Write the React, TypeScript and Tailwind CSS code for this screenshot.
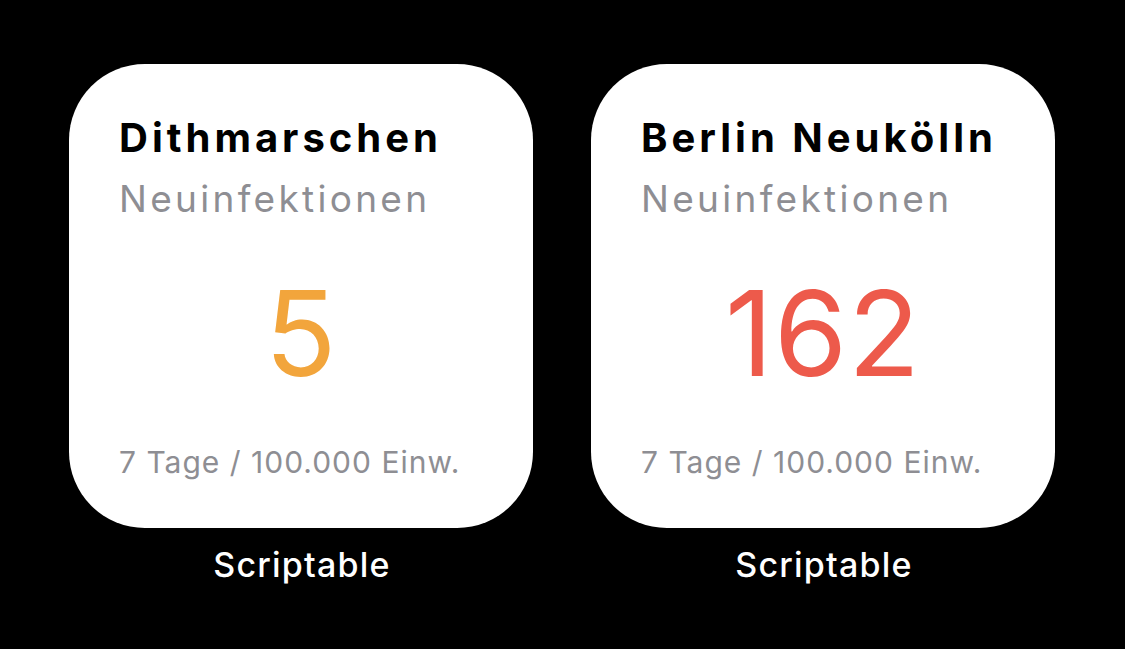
import React from "react";

const font = { fontFamily: "Inter, 'Noto Sans', sans-serif" };

function Widget({ title, value, color }: { title: string; value: string; color: string }) {
  return (
    <div className="flex flex-col items-center">
      <div className="w-[464px] h-[464px] rounded-[76px] bg-white flex flex-col px-[50px] pt-[54px]">
        <div className="text-[40px] leading-[40px] font-bold text-black tracking-[4px] whitespace-nowrap">{title}</div>
        <div className="mt-[22px] text-[37px] leading-[37px] font-normal text-[#8e8e93] tracking-[3.3px] whitespace-nowrap">Neuinfektionen</div>
        <div className={`mt-[57px] text-[118px] leading-[118px] font-normal text-center tracking-[1px] ${color}`}>{value}</div>
        <div className="mt-[55px] text-[30px] leading-[30px] font-normal text-[#8e8e93] tracking-[1px] whitespace-nowrap">7 Tage / 100.000 Einw.</div>
      </div>
      <div className="mt-[20px] text-[34px] leading-[34px] font-medium text-white tracking-[1.2px] pl-[2px]">Scriptable</div>
    </div>
  );
}

export default function App() {
  return (
    <div className="w-[1125px] h-[649px] bg-black flex gap-[58px] pl-[69px] pt-[64px] overflow-hidden" style={font}>
      <Widget title="Dithmarschen" value="5" color="text-[#f2a53c]" />
      <Widget title="Berlin Neukölln" value="162" color="text-[#ed5a4b]" />
    </div>
  );
}
